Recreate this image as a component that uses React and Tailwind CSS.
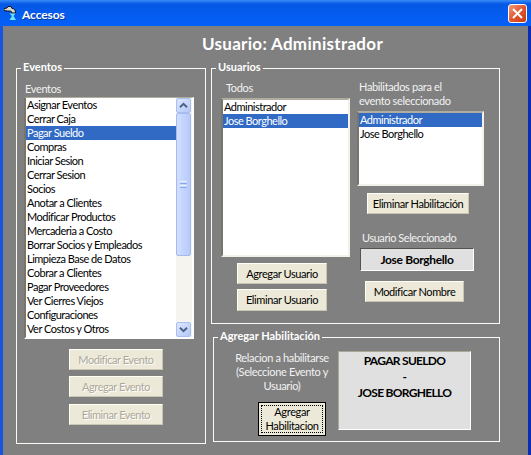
import React from "react";
import clsx from "clsx";

const events = [
  "Asignar Eventos", "Cerrar Caja", "Pagar Sueldo", "Compras", "Iniciar Sesion",
  "Cerrar Sesion", "Socios", "Anotar a Clientes", "Modificar Productos",
  "Mercaderia a Costo", "Borrar Socios y Empleados", "Limpieza Base de Datos",
  "Cobrar a Clientes", "Pagar Proveedores", "Ver Cierres Viejos",
  "Configuraciones", "Ver Costos y Otros",
];

function Group({ title, className, children }) {
  return (
    <section className={clsx("relative border border-[#fbfbf6]", className)}>
      <h2 className="absolute -top-[9px] left-[4px] bg-[#808080] px-[2px] text-[11px] leading-[14px] font-bold tracking-[0px] text-white">
        {title}
      </h2>
      {children}
    </section>
  );
}

function Rows({ items, selected }) {
  return (
    <ul className="min-w-0 flex-1 tracking-[-0.5px]">
      {items.map((item) => (
        <li
          key={item}
          className={clsx("h-[14px] pl-px leading-[14px]", item === selected ? "bg-[#316ac5] text-white" : "text-black")}
        >
          {item}
        </li>
      ))}
    </ul>
  );
}

function Button({ className, disabled, children }) {
  return (
    <button
      disabled={disabled}
      className={clsx(
        "flex items-center justify-center border border-t-[#fffff5] border-l-[#fffff5] border-r-[#c8c5b2] border-b-[#c8c5b2] bg-[#ece9d8] leading-[14px]",
        disabled ? "tracking-[-0.45px] text-[#aca899] [text-shadow:1px_1px_0_#fff]" : "tracking-[-0.4px] text-black",
        className
      )}
    >
      {children}
    </button>
  );
}

function ScrollArrow({ up }) {
  return (
    <div className="flex h-[15px] w-[15px] shrink-0 items-center justify-center rounded-[2px] border border-[#a9bff0] bg-linear-to-br from-[#dce6ff] to-[#b4c8f8]">
      <svg width="9" height="7" viewBox="0 0 9 7" fill="none" stroke="#4d6185" strokeWidth="2">
        <path d={up ? "M1 5.2 4.5 1.8 8 5.2" : "M1 1.8 4.5 5.2 8 1.8"} />
      </svg>
    </div>
  );
}

export default function App() {
  return (
    <div className="flex h-[455px] w-[531px] flex-col overflow-hidden bg-[#808080] font-['Lato',sans-serif] text-[11px] leading-[14px] tracking-[-0.35px] whitespace-nowrap">
      <header className="flex h-[26px] shrink-0 items-center bg-linear-to-b from-[#3a8cf8] via-[#0458e6] via-15% to-[#0560f8] pr-[4px] pl-[4px]">
        <svg width="14" height="16" viewBox="0 0 14 16">
          <path d="M0 3.500 3 3l1-1.500h3L8 3.500c2.500 0 3.500 1.500 3.500 4.500H8C8 6.500 7 6 5 6H3L0 5.500z" fill="#d8dcd0" stroke="#111" strokeWidth="1" />
          <path d="M5.500 8.500h6L9.500 11l2.500 4H5.500L8 11z" fill="#6de5f5" />
        </svg>
        <h1 className="ml-[4px] pt-[3px] text-[12px] leading-[14px] font-bold tracking-[-0.1px] text-white [text-shadow:1px_1px_0_#0a3a9c]">Accesos</h1>
        <button className="mt-[1px] ml-auto flex h-[19px] w-[19px] items-center justify-center rounded-[3px] border border-white bg-linear-to-br from-[#f09a7c] via-[#e2552e] to-[#c93a10]">
          <svg width="11" height="11" viewBox="0 0 11 11" stroke="#fff" strokeWidth="2">
            <path d="M1 1 10 10M10 1 1 10" />
          </svg>
        </button>
      </header>

      <main className="min-h-0 flex-1 border-r-[3px] border-l-[3px] border-r-[#0a2bb4] border-l-[#1754e0]">
        <div className="flex h-[42px] justify-center pt-[8px] pl-[54px]">
          <p className="text-[17px] leading-[20px] font-bold tracking-[0.3px] text-white">Usuario: Administrador</p>
        </div>

        <div className="flex gap-[5px] pl-[13px]">
          <Group title="Eventos" className="h-[376px] w-[190px] pt-[13px] pl-[7px]">
            <p className="h-[15px] pl-px leading-[14px] text-[#f2f2f2]">Eventos</p>
            <div className="flex h-[242px] w-[170px] border-2 border-t-1 border-t-[#b0ad9e] border-r-white border-b-white border-l-[#77756c] bg-white">
              <Rows items={events} selected="Pagar Sueldo" />
              <div className="flex w-[16px] flex-col bg-[#f5f4ee]">
                <ScrollArrow up />
                <div className="flex h-[143px] w-[15px] flex-col items-center justify-center gap-px rounded-[2px] border border-[#a5bbef] bg-linear-to-r from-[#d2dfff] to-[#b6c9fa]">
                  <span className="h-px w-[7px] bg-[#eef4ff]" />
                  <span className="h-px w-[7px] bg-[#8caaf0]" />
                  <span className="h-px w-[7px] bg-[#eef4ff]" />
                  <span className="h-px w-[7px] bg-[#8caaf0]" />
                </div>
                <div className="flex-1" />
                <ScrollArrow />
              </div>
            </div>
            <div className="mt-[10px] ml-[45px] flex w-[94px] flex-col gap-[6px]">
              <Button disabled className="h-[21px]">Modificar Evento</Button>
              <Button disabled className="h-[21px]">Agregar Evento</Button>
              <Button disabled className="mt-px h-[21px]">Eliminar Evento</Button>
            </div>
          </Group>

          <div className="flex flex-col">
            <Group title="Usuarios" className="flex h-[256px] w-[289px] pl-[9px]">
              <div className="flex w-[136px] flex-col">
                <p className="mt-[12px] ml-[5px] text-[#f2f2f2]">Todos</p>
                <div className="mt-[3px] flex h-[159px] w-[129px] border-2 border-t-[#b0ad9e] border-r-[#f2f2ea] border-b-[#f2f2ea] border-l-[#77756c] bg-white">
                  <Rows items={["Administrador", "Jose Borghello"]} selected="Jose Borghello" />
                </div>
                <div className="mt-[6px] ml-[16px] flex w-[90px] flex-col gap-[5px]">
                  <Button className="h-[21px]">Agregar Usuario</Button>
                  <Button className="h-[22px]">Eliminar Usuario</Button>
                </div>
              </div>
              <div className="flex w-[128px] flex-col">
                <p className="mt-[11px] ml-[2px] text-[#f2f2f2]">Habilitados para el<br />evento seleccionado</p>
                <div className="mt-[3px] flex h-[75px] w-[127px] border-2 border-t-[#b0ad9e] border-r-[#f2f2ea] border-b-[#f2f2ea] border-l-[#77756c] bg-white">
                  <Rows items={["Administrador", "Jose Borghello"]} selected="Administrador" />
                </div>
                <Button className="mt-[7px] ml-[10px] h-[21px] w-[102px]">Eliminar Habilitación</Button>
                <p className="mt-[17px] ml-[5px] tracking-[-0.45px] text-[#f2f2f2]">Usuario Seleccionado</p>
                <div className="mt-[3px] ml-[3px] flex h-[23px] w-[114px] items-center justify-center border border-t-[#55534d] border-r-white border-b-white border-l-[#55534d] bg-[#e0e0e0] text-[12px] font-bold tracking-[-0.35px]">
                  Jose Borghello
                </div>
                <Button className="mt-[10px] ml-[8px] h-[21px] w-[99px]">Modificar Nombre</Button>
              </div>
            </Group>

            <Group title="Agregar Habilitación" className="mt-[13px] ml-[2px] flex h-[105px] w-[287px]">
              <div className="ml-[15px] flex w-[106px] flex-col items-center pt-[13px]">
                <p className="text-center text-[#f2f2f2]">Relacion a habilitarse<br />(Seleccione Evento y<br />Usuario)</p>
                <button className="mt-[9px] ml-[20px] h-[34px] w-[68px] border border-black bg-[#ece9d8] p-[2px] text-[11px] leading-[14px]">
                  <span className="block h-full outline-1 -outline-offset-1 outline-black outline-dotted">Agregar<br />Habilitacion</span>
                </button>
              </div>
              <div className="mt-[13px] ml-[3px] h-[79px] w-[133px] border border-t-[#aaa797] border-r-white border-b-white border-l-[#aaa797] bg-[#e0e0e0] pt-px text-center text-[12px] leading-[16px] font-bold tracking-[-0.7px]">
                PAGAR SUELDO<br />-<br />JOSE BORGHELLO
              </div>
            </Group>
          </div>
        </div>
      </main>
    </div>
  );
}
